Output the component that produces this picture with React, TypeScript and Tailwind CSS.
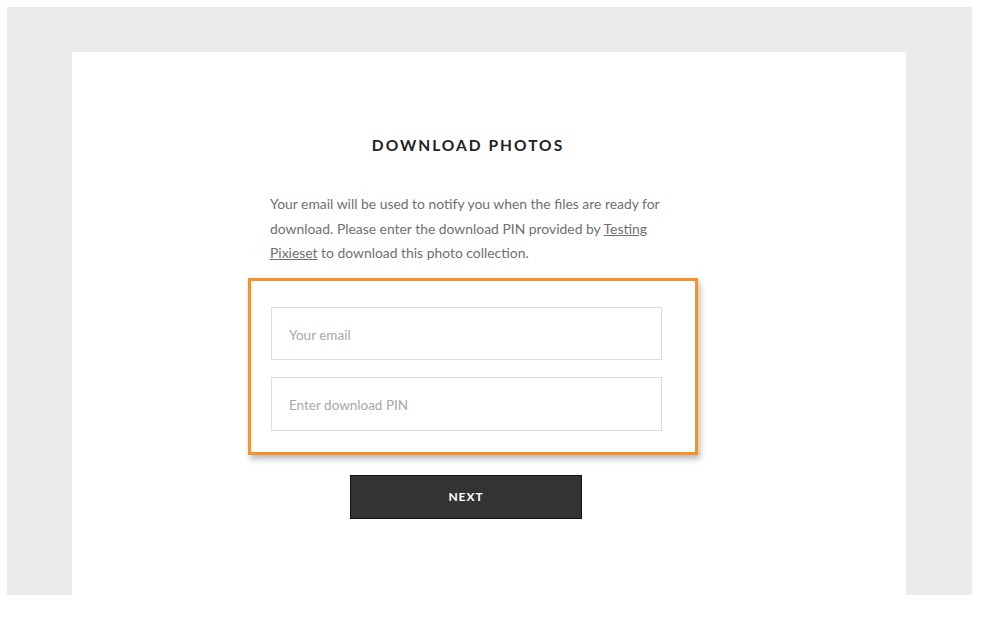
export default function App() {
  return (
    <div className="w-full h-[619px] bg-white pt-[7px] pl-[7px] font-['Lato','Noto_Sans',sans-serif]">
      {/* grey backdrop */}
      <div className="w-[965px] h-[588px] bg-[#ebebeb] pt-[45px] pl-[65px]">
        {/* white card */}
        <div className="w-[834px] h-[543px] bg-white pl-[198px] pt-[83px]">
          <div className="w-[396px] flex flex-col">
            <h1 className="text-center text-[15.5px] font-bold tracking-[0.13em] text-[#222] leading-[20px]">
              DOWNLOAD PHOTOS
            </h1>

            <p className="mt-[37px] text-[13.9px] leading-[24.5px] text-[#6f6f6f]">
              Your email will be used to notify you when the files are ready for download. Please enter the
              download PIN provided by <span className="underline">Testing Pixieset</span> to download this
              photo collection.
            </p>

            {/* highlighted fields */}
            <div className="mt-[12px] -ml-[22px] w-[450px] border-[3px] border-[#f7922b] pt-[26px] pb-[21px] pl-[20px] shadow-[2px_4px_6px_rgba(0,0,0,0.28)]">
              <div className="flex flex-col gap-[17px] w-[391px]">
                <input
                  placeholder="Your email"
                  className="h-[53px] border border-[#dcdcdc] px-[17px] pt-[3px] text-[13.5px] text-[#555] placeholder:text-[#a8a8a8] outline-none"
                />
                <input
                  placeholder="Enter download PIN"
                  className="h-[54px] border border-[#dcdcdc] px-[17px] pt-[2px] text-[13.5px] text-[#555] placeholder:text-[#a8a8a8] outline-none"
                />
              </div>
            </div>

            <button className="mt-[20px] ml-[80px] w-[232px] h-[44px] bg-[#333] border border-[#111] text-white text-[12px] font-bold tracking-[0.08em]">
              NEXT
            </button>
          </div>
        </div>
      </div>
    </div>
  );
}
